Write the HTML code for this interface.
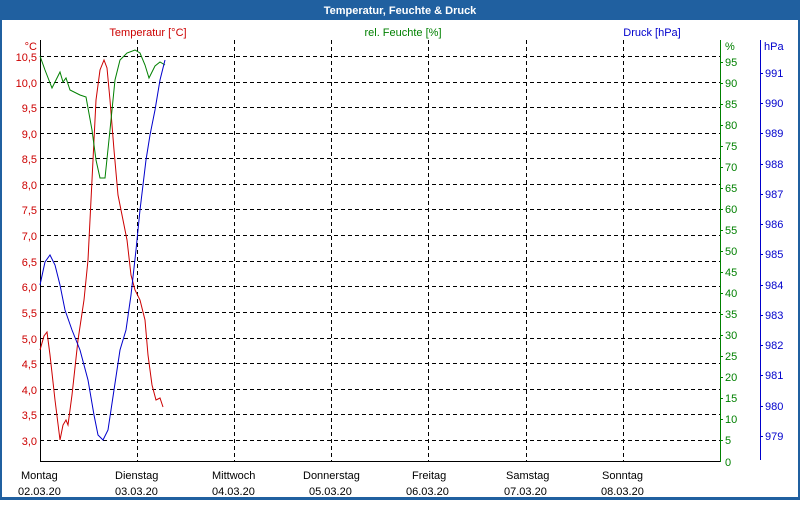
<!DOCTYPE html>
<html><head><meta charset="utf-8"><style>
html,body{margin:0;padding:0;background:#fff;}
body{width:800px;height:500px;overflow:hidden;position:relative;font-family:"Liberation Sans","DejaVu Sans",sans-serif;}
svg text{font-family:"Liberation Sans","DejaVu Sans",sans-serif;font-size:11px;}
</style></head><body>
<svg width="800" height="500" xmlns="http://www.w3.org/2000/svg">
<rect x="0" y="0" width="800" height="500" fill="#2060a0"/>
<rect x="2" y="20" width="796" height="477" fill="#fff"/>
<text x="400" y="14" text-anchor="middle" fill="#fff" font-weight="bold" style="font-size:11px">Temperatur, Feuchte &amp; Druck</text>
<text x="148" y="36" text-anchor="middle" fill="#cc0000">Temperatur [°C]</text>
<text x="403" y="36" text-anchor="middle" fill="#008000">rel. Feuchte [%]</text>
<text x="652" y="36" text-anchor="middle" fill="#0000cc">Druck [hPa]</text>
<g shape-rendering="crispEdges" stroke="#000" stroke-dasharray="4,3" stroke-width="1">
<line x1="40" x2="720" y1="56.5" y2="56.5"/><line x1="40" x2="720" y1="82.5" y2="82.5"/><line x1="40" x2="720" y1="107.5" y2="107.5"/><line x1="40" x2="720" y1="133.5" y2="133.5"/><line x1="40" x2="720" y1="158.5" y2="158.5"/><line x1="40" x2="720" y1="184.5" y2="184.5"/><line x1="40" x2="720" y1="209.5" y2="209.5"/><line x1="40" x2="720" y1="235.5" y2="235.5"/><line x1="40" x2="720" y1="261.5" y2="261.5"/><line x1="40" x2="720" y1="286.5" y2="286.5"/><line x1="40" x2="720" y1="312.5" y2="312.5"/><line x1="40" x2="720" y1="338.5" y2="338.5"/><line x1="40" x2="720" y1="363.5" y2="363.5"/><line x1="40" x2="720" y1="389.5" y2="389.5"/><line x1="40" x2="720" y1="414.5" y2="414.5"/><line x1="40" x2="720" y1="440.5" y2="440.5"/>
<line x1="137.5" x2="137.5" y1="40" y2="461"/><line x1="234.5" x2="234.5" y1="40" y2="461"/><line x1="331.5" x2="331.5" y1="40" y2="461"/><line x1="428.5" x2="428.5" y1="40" y2="461"/><line x1="526.5" x2="526.5" y1="40" y2="461"/><line x1="623.5" x2="623.5" y1="40" y2="461"/>
</g>
<g shape-rendering="crispEdges">
<line x1="40.5" x2="40.5" y1="40" y2="461" stroke="#000"/>
<line x1="40" x2="720" y1="461.5" y2="461.5" stroke="#000"/>
<line x1="720.5" x2="720.5" y1="40" y2="462" stroke="#008000"/>
<line x1="760.5" x2="760.5" y1="40" y2="460" stroke="#0000cc"/>
</g>
<g fill="#cc0000" text-anchor="end">
<text x="37" y="50">°C</text>
<text x="37" y="61">10,5</text><text x="37" y="87">10,0</text><text x="37" y="112">9,5</text><text x="37" y="138">9,0</text><text x="37" y="163">8,5</text><text x="37" y="189">8,0</text><text x="37" y="214">7,5</text><text x="37" y="240">7,0</text><text x="37" y="266">6,5</text><text x="37" y="291">6,0</text><text x="37" y="317">5,5</text><text x="37" y="343">5,0</text><text x="37" y="368">4,5</text><text x="37" y="394">4,0</text><text x="37" y="419">3,5</text><text x="37" y="445">3,0</text>
</g>
<g fill="#008000" id="g">
<text x="725" y="50">%</text>
<path d="M720 62.5h3M720 83.5h3M720 104.5h3M720 125.5h3M720 146.5h3M720 167.5h3M720 188.5h3M720 209.5h3M720 230.5h3M720 251.5h3M720 272.5h3M720 293.5h3M720 314.5h3M720 335.5h3M720 356.5h3M720 377.5h3M720 398.5h3M720 419.5h3M720 440.5h3" stroke="#008000" shape-rendering="crispEdges"/>
<text x="725" y="66">95</text><text x="725" y="87">90</text><text x="725" y="108">85</text><text x="725" y="129">80</text><text x="725" y="150">75</text><text x="725" y="171">70</text><text x="725" y="192">65</text><text x="725" y="213">60</text><text x="725" y="234">55</text><text x="725" y="255">50</text><text x="725" y="276">45</text><text x="725" y="297">40</text><text x="725" y="318">35</text><text x="725" y="339">30</text><text x="725" y="360">25</text><text x="725" y="381">20</text><text x="725" y="402">15</text><text x="725" y="423">10</text><text x="725" y="444">5</text><text x="725" y="466">0</text>
</g>
<g fill="#0000cc">
<text x="764" y="50">hPa</text>
<path d="M760 73.5h3M760 103.5h3M760 133.5h3M760 164.5h3M760 194.5h3M760 224.5h3M760 254.5h3M760 285.5h3M760 315.5h3M760 345.5h3M760 375.5h3M760 406.5h3M760 436.5h3" stroke="#0000cc" shape-rendering="crispEdges"/>
<text x="765" y="77">991</text><text x="765" y="107">990</text><text x="765" y="137">989</text><text x="765" y="168">988</text><text x="765" y="198">987</text><text x="765" y="228">986</text><text x="765" y="258">985</text><text x="765" y="289">984</text><text x="765" y="319">983</text><text x="765" y="349">982</text><text x="765" y="379">981</text><text x="765" y="410">980</text><text x="765" y="440">979</text>
</g>
<g fill="#000" style="font-size:11px">
<text x="21" y="479">Montag</text><text x="18" y="495">02.03.20</text>
<text x="115" y="479">Dienstag</text><text x="115" y="495">03.03.20</text>
<text x="212" y="479">Mittwoch</text><text x="212" y="495">04.03.20</text>
<text x="303" y="479">Donnerstag</text><text x="309" y="495">05.03.20</text>
<text x="412" y="479">Freitag</text><text x="406" y="495">06.03.20</text>
<text x="506" y="479">Samstag</text><text x="504" y="495">07.03.20</text>
<text x="602" y="479">Sonntag</text><text x="601" y="495">08.03.20</text>
</g>
<polyline fill="none" stroke="#cc0000" stroke-width="1" points="40,350 44,336 47,332 50,355 55,400 60,440 63,425 66,420 68,425 72,395 78,340 84,300 88,260 92,180 96,100 100,70 104,60 107,68 110,100 114,150 118,195 123,220 127,240 131,275 135,290 140,300 145,320 148,355 152,385 156,400 160,398 163,407"/>
<polyline fill="none" stroke="#008000" stroke-width="1" points="40,56 45,70 52,88 60,72 63,82 66,78 70,90 80,95 86,97 92,130 96,160 100,178 105,178 110,130 115,80 120,60 127,53 135,50 140,53 145,65 149,78 155,66 160,62 165,65"/>
<polyline fill="none" stroke="#0000cc" stroke-width="1" points="40,285 45,262 50,255 55,265 60,285 65,310 72,330 80,350 88,380 94,415 98,435 103,440 108,430 114,390 120,350 126,330 131,295 136,250 140,210 146,160 150,135 155,110 160,80 165,60"/>
</svg>
</body></html>
